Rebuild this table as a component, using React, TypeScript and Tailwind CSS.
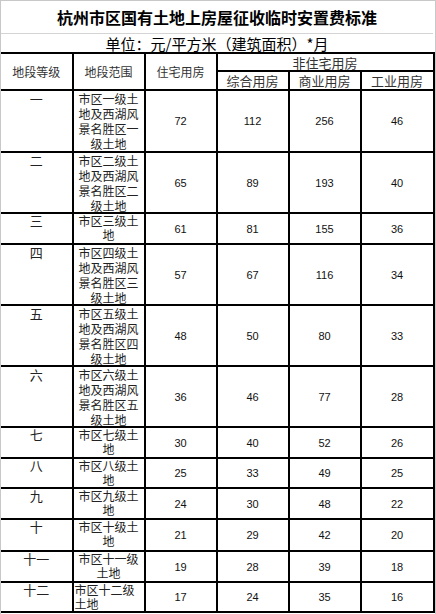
import React from 'react';

type Row = {
  grade: string;
  area: string[];
  alignLeft?: boolean;
  vals: [number, number, number, number];
  h: number;
};

const rows: Row[] = [
  { grade: '一', area: ['市区一级土', '地及西湖风', '景名胜区一', '级土地'], vals: [72, 112, 256, 46], h: 62 },
  { grade: '二', area: ['市区二级土', '地及西湖风', '景名胜区二', '级土地'], vals: [65, 89, 193, 40], h: 61 },
  { grade: '三', area: ['市区三级土', '地'], vals: [61, 81, 155, 36], h: 31 },
  { grade: '四', area: ['市区四级土', '地及西湖风', '景名胜区三', '级土地'], vals: [57, 67, 116, 34], h: 61 },
  { grade: '五', area: ['市区五级土', '地及西湖风', '景名胜区四', '级土地'], vals: [48, 50, 80, 33], h: 61 },
  { grade: '六', area: ['市区六级土', '地及西湖风', '景名胜区五', '级土地'], vals: [36, 46, 77, 28], h: 61 },
  { grade: '七', area: ['市区七级土', '地'], vals: [30, 40, 52, 26], h: 31 },
  { grade: '八', area: ['市区八级土', '地'], vals: [25, 33, 49, 25], h: 30 },
  { grade: '九', area: ['市区九级土', '地'], vals: [24, 30, 48, 22], h: 31 },
  { grade: '十', area: ['市区十级土', '地'], vals: [21, 29, 42, 20], h: 32 },
  { grade: '十一', area: ['市区十一级', '土地'], vals: [19, 28, 39, 18], h: 31 },
  { grade: '十二', area: ['市区十二级', '土地'], alignLeft: true, vals: [17, 24, 35, 16], h: 30 },
];

const cjk = { fontFamily: '"Noto Sans CJK SC", "Noto Sans", sans-serif' };
const num = { fontFamily: '"Liberation Sans", Arial, sans-serif' };

export default function App() {
  return (
    <div
      className="w-[436px] h-[614px] bg-white border-l border-[#c8c8c8] border-t border-r overflow-hidden text-[#222]"
      style={cjk}
    >
      <div className="h-[33px] flex items-center justify-center text-[16px] font-bold text-black border-b border-[#d4d4d4] w-[432px]">
        杭州市区国有土地上房屋征收临时安置费标准
      </div>
      <div className="h-[18px] flex items-center justify-center text-[15px] leading-none text-black w-[432px]">
        单位：元/平方米（建筑面积）*月
      </div>
      <table className="table-fixed border-collapse w-[433px] text-[12px] -ml-px">
        <colgroup>
          <col className="w-[72px]" />
          <col className="w-[72px]" />
          <col className="w-[72px]" />
          <col className="w-[72px]" />
          <col className="w-[72px]" />
          <col className="w-[73px]" />
        </colgroup>
        <thead>
          <tr className="h-[18px]">
            <th rowSpan={2} className="border-2 border-black border-l-[#c8c8c8] border-l font-normal text-[#333] p-0 leading-[15px] align-middle">
              地段等级
            </th>
            <th rowSpan={2} className="border-2 border-black font-normal text-[#333] p-0 leading-[15px] align-middle">
              地段范围
            </th>
            <th rowSpan={2} className="border-2 border-black font-normal text-[#333] p-0 leading-[15px] align-middle">
              住宅用房
            </th>
            <th colSpan={3} className="border-2 border-black font-normal text-[13px] text-[#333] p-0 leading-[15px] align-middle">
              非住宅用房
            </th>
          </tr>
          <tr className="h-[19px]">
            <th className="border-2 border-black font-normal text-[13px] text-[#333] p-0 leading-[15px]">综合用房</th>
            <th className="border-2 border-black font-normal text-[13px] text-[#333] p-0 leading-[15px]">商业用房</th>
            <th className="border-2 border-black font-normal text-[13px] text-[#333] p-0 leading-[15px]">工业用房</th>
          </tr>
        </thead>
        <tbody>
          {rows.map((r) => {
            const tall = r.area.length > 2;
            return (
              <tr key={r.grade} style={{ height: r.h }}>
                <td
                  className={
                    tall
                      ? 'border-2 border-black border-l border-l-[#c8c8c8] p-0 align-top text-center text-[13px] leading-[15px]'
                      : 'border-2 border-black border-l border-l-[#c8c8c8] p-0 align-top text-center text-[13px] leading-[14px]'
                  }
                >
                  {r.grade}
                </td>
                <td className="border-2 border-black p-0 align-top">
                  <div
                    className={
                      (tall ? 'leading-[15px] ' : 'leading-[14px] ') +
                      (r.alignLeft ? 'text-left pl-px' : 'text-center')
                    }
                    style={{ height: r.h - 2, overflow: 'hidden' }}
                  >
                    {r.area.map((l, i) => (
                      <div key={i} className="whitespace-nowrap">
                        {l}
                      </div>
                    ))}
                  </div>
                </td>
                {r.vals.map((v, i) => (
                  <td
                    key={i}
                    className="border-2 border-black p-0 align-middle text-center text-[11px] leading-[14px] text-[#111]"
                    style={num}
                  >
                    {v}
                  </td>
                ))}
              </tr>
            );
          })}
        </tbody>
      </table>
    </div>
  );
}
